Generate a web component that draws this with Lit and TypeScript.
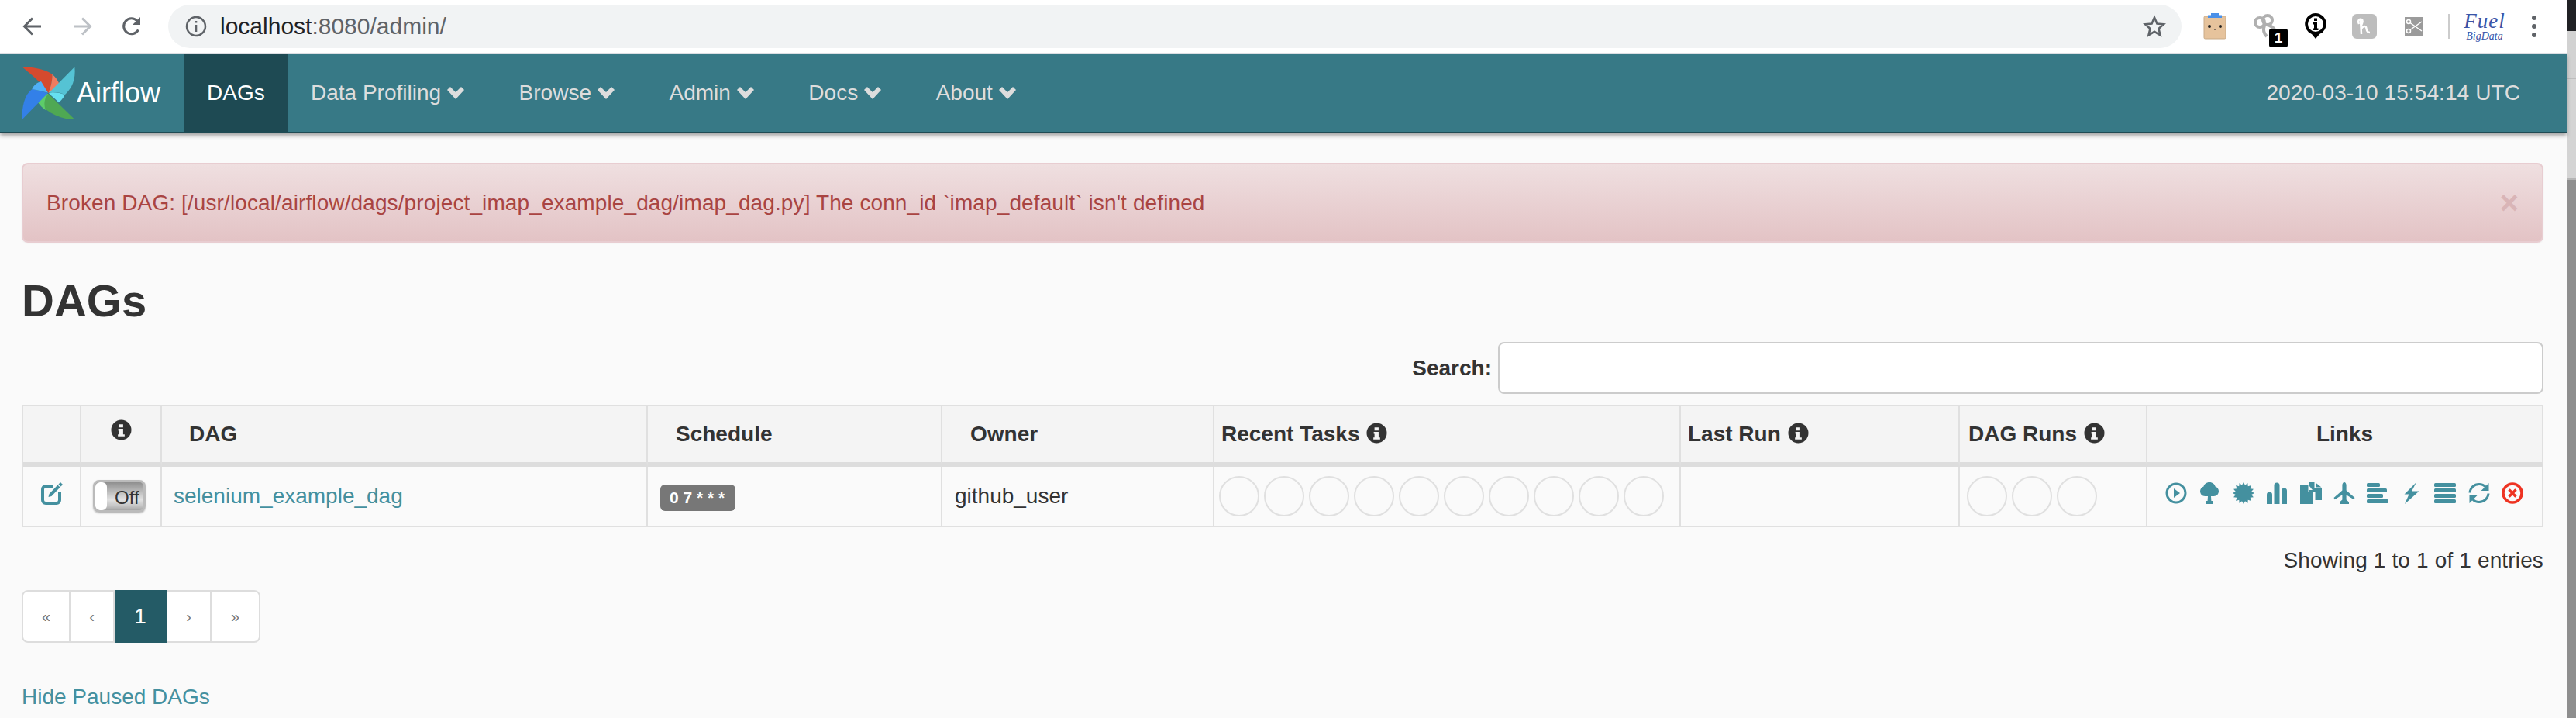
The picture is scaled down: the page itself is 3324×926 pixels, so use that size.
import { LitElement, html, css } from "lit";
import { customElement } from "lit/decorators.js";

const info = html`<svg class="info" viewBox="0 0 28 28"><circle cx="14" cy="14" r="13.5" fill="#333"/><path fill="#f4f4f4" d="M11 6.500h5.500v4H11zM10 12.500h6.500V20H18.500v2.500H9.500V20H11v-5H10z"/></svg>`;

function burst() {
  const pts: string[] = [];
  for (let i = 0; i < 32; i++) {
    const r = i % 2 === 0 ? 14 : 10.4;
    const a = (i * Math.PI) / 16;
    pts.push(`${(14 + r * Math.sin(a)).toFixed(2)},${(14 - r * Math.cos(a)).toFixed(2)}`);
  }
  return pts.join(" ");
}

const linkIcons = [
  html`<svg viewBox="0 0 28 28"><circle cx="14" cy="14" r="12" fill="none" stroke="currentColor" stroke-width="3"/><path fill="currentColor" d="M11 8l8 6-8 6z"/></svg>`,
  html`<svg viewBox="0 0 28 28"><path fill="currentColor" d="M14 0c4 0 7 2.500 7.500 5.500 3 1 4.500 3.500 4.500 6 0 3.700-2.800 6.500-6.300 6.500h-3.700l.4 6h2.100v4h-9v-4h2.100l.4-6H8.300C4.800 18 2 15.200 2 11.500c0-2.500 1.500-5 4.500-6C7 2.500 10 0 14 0z"/></svg>`,
  html`<svg viewBox="0 0 28 28"><polygon fill="currentColor" points="${burst()}"/></svg>`,
  html`<svg viewBox="0 0 28 28"><path fill="currentColor" d="M1 16a3.500 3.500 0 0 1 7 0v12H1zM10.500 4a3.500 3.500 0 0 1 7 0v24h-7zM20 11a3.500 3.500 0 0 1 7 0v17h-7z"/></svg>`,
  html`<svg viewBox="0 0 28 28"><path fill="currentColor" d="M12 0h6.500v7.500h9.500V23h-8.500V12.500h-7.500zM20 .5l7.500 6h-7.500z"/><path fill="currentColor" d="M0 4h10.500v8h6.500v16H0z"/><path fill="#fafafa" d="M12 5l4 5h-4z"/></svg>`,
  html`<svg viewBox="0 0 28 28"><path fill="currentColor" d="M14 0c1.600 0 2.600 1.800 2.600 4v6.500L27.500 20l-1.200 2.200-9.700-6v6.300l3.400 3V28h-12v-2.500l3.400-3v-6.300l-9.700 6L.5 20l10.900-9.500V4c0-2.200 1-4 2.600-4z"/></svg>`,
  html`<svg viewBox="0 0 28 28"><g fill="currentColor"><rect x="0" y="1" width="17" height="5" rx="1.500"/><rect x="0" y="8" width="26" height="5" rx="1.500"/><rect x="0" y="15" width="21" height="5" rx="1.500"/><rect x="0" y="22" width="28" height="5" rx="1.500"/></g></svg>`,
  html`<svg viewBox="0 0 28 28"><path fill="currentColor" d="M20 0L14 11.500H23.500L5 28 10.500 15.500H4.500z"/></svg>`,
  html`<svg viewBox="0 0 28 28"><g fill="currentColor"><rect x="0" y="1" width="28" height="5" rx="1.500"/><rect x="0" y="8" width="28" height="5" rx="1.500"/><rect x="0" y="15" width="28" height="5" rx="1.500"/><rect x="0" y="22" width="28" height="5" rx="1.500"/></g></svg>`,
  html`<svg viewBox="0 0 28 28"><path fill="none" stroke="currentColor" stroke-width="3" d="M2 13.500C2.500 7 7.500 2.500 14 2.500c3.500 0 6.300 1.300 8.300 3.500M26 14.500c-.5 6.500-5.500 11-12 11-3.500 0-6.300-1.300-8.300-3.500"/><path fill="currentColor" d="M26.500 1v10h-10zM1.500 27V17h10z"/></svg>`,
  html`<svg class="danger" viewBox="0 0 28 28"><circle cx="14" cy="14" r="12" fill="none" stroke="currentColor" stroke-width="3.500"/><path fill="none" stroke="currentColor" stroke-width="3.500" d="M9.500 9.500l9 9M18.500 9.500l-9 9"/></svg>`,
];

const chevron = html`<svg class="chev" viewBox="0 0 22 20"><path fill="currentColor" d="M0 6l4-4 7 7 7-7 4 4-11 12z"/></svg>`;

@customElement("app-root")
export class AppRoot extends LitElement {
  static styles = css`
    :host {
      display: flex;
      height: 926px;
      width: 3324px;
      overflow: hidden;
      font-family: "Liberation Sans", Arial, sans-serif;
      font-size: 28px;
      color: #333;
      background: #fafafa;
    }
    .main { width: 3312px; flex: none; display: flex; flex-direction: column; }
    .strip { width: 12px; flex: none; display: flex; flex-direction: column; box-shadow: inset 2px 0 2px rgba(0,0,0,.12); }
    .s1 { height: 40px; background: #202124; }
    .s2 { height: 60px; background: #d2d2d2; border-bottom: 2px solid #bdbdbd; }
    .s3 { height: 128px; background: #d4d4d4; }
    .s4 { flex: 1; background: #8e8e8e; border-top: 2px solid #b5b5b5; }

    .chrome { height: 68px; background: #fff; border-bottom: 2px solid #dee1e6; display: flex; align-items: center; flex: none; position: relative; }
    .tb { width: 26px; height: 26px; flex: none; color: #5f6368; }
    .tb.back { margin-left: 29px; }
    .tb.fwd { margin-left: 38px; color: #bdc1c6; }
    .tb.reload { margin-left: 38px; }
    .url { margin-left: 34px; width: 2598px; height: 56px; background: #f1f3f4; border-radius: 28px; display: flex; align-items: center; flex: none; }
    .url .i { width: 28px; height: 28px; margin-left: 22px; color: #5f6368; flex: none; }
    .url .text { margin-left: 17px; font-size: 30px; color: #5f6368; flex: 1; }
    .url .text b { font-weight: 400; color: #202124; }
    .url .star { width: 30px; height: 30px; color: #5f6368; margin-right: 20px; flex: none; }
    .ext { flex: none; display: block; }
    .e1 { width: 30px; height: 34px; margin-left: 28px; }
    .knot { position: relative; margin-left: 35px; width: 30px; height: 32px; flex: none; }
    .knot svg { width: 30px; height: 32px; display: block; }
    .badge { position: absolute; left: 20px; top: 19px; width: 24px; height: 24px; background: #000; color: #fff; border-radius: 3px; font: 700 19px/24px "Liberation Sans", sans-serif; text-align: center; }
    .e3 { width: 28px; height: 34px; margin-left: 36px; }
    .e4 { width: 32px; height: 32px; margin-left: 33px; }
    .e5 { width: 24px; height: 24px; margin-left: 36px; }
    .vr { width: 2px; height: 32px; background: #ccc; margin-left: 32px; flex: none; }
    .fuel { margin-left: 23px; width: 44px; display: flex; flex-direction: column; align-items: center; color: #3a55a8; font-family: "Liberation Serif", serif; font-style: italic; flex: none; }
    .fuel .a { font-size: 27px; line-height: 26px; letter-spacing: 1px; }
    .fuel .b { font-size: 14px; line-height: 14px; white-space: nowrap; }
    .dots { margin-left: 39px; width: 6px; display: flex; flex-direction: column; gap: 5px; flex: none; }
    .dots i { width: 6px; height: 6px; border-radius: 50%; background: #5f6368; display: block; }

    .nav { height: 100px; flex: none; background: #377986; border-bottom: 2px solid #1e4a53; box-shadow: 0 3px 5px rgba(0,0,0,.35); display: flex; align-items: stretch; color: #ddd; position: relative; }
    .brand { width: 237px; flex: none; display: flex; align-items: center; }
    .mill { width: 70px; height: 70px; margin-left: 28px; flex: none; }
    .brand span { color: #fff; font-size: 36px; margin-left: 1px; }
    .item { padding: 0 30px; display: flex; align-items: center; white-space: nowrap; }
    .item.active { background: #1e4a53; color: #fff; width: 134px; box-sizing: border-box; }
    .chev { width: 22px; height: 20px; margin: 0 10.5px 0 8px; flex: none; }
    .clock { margin-left: auto; margin-right: 60px; display: flex; align-items: center; letter-spacing: .1px; }

    .content { padding: 38px 30px 0 28px; display: flex; flex-direction: column; }
    .alert { height: 103px; box-sizing: border-box; border: 2px solid #e8cdd1; border-radius: 8px; background: linear-gradient(#efdfe0, #e3c3c5); color: #a94442; display: flex; align-items: center; padding: 0 30px; justify-content: space-between; box-shadow: 0 1px 2px rgba(0,0,0,.05); }
    .alert .msg { letter-spacing: .11px; }
    .alert .x { font-weight: 700; font-size: 42px; color: #d9b5b7; line-height: 1; }
    h1 { margin: 42px 0 0; font-size: 58px; line-height: 66px; font-weight: 700; color: #333; }
    .search { display: flex; justify-content: flex-end; align-items: center; gap: 8px; font-weight: 700; height: 67px; margin-top: 20px; }
    .search input { width: 1349px; height: 67px; box-sizing: border-box; border: 2px solid #ccc; border-radius: 8px; background: #fff; padding: 0; }
    table { margin-top: 14px; width: 3254px; table-layout: fixed; border-collapse: separate; border-spacing: 0; border-top: 2px solid #e0e0e0; border-left: 2px solid #e0e0e0; }
    th, td { border-right: 2px solid #e0e0e0; box-sizing: border-box; padding: 0; vertical-align: middle; text-align: left; }
    th { background: #f4f4f4; height: 78px; border-bottom: 6px solid #dddddd; font-weight: 700; white-space: nowrap; }
    td { height: 78px; border-bottom: 2px solid #e0e0e0; }
    .pl38 { padding-left: 36px; }
    .pl35 { padding-left: 35px; }
    .pl11 { padding-left: 9px; }
    .pl12 { padding-left: 11px; }
    .ctr { text-align: center; }
    .info { width: 27px; height: 27px; }
    .th-icon .info { vertical-align: 4px; }
    .with-i .info { margin-left: 9px; vertical-align: -3px; }
    .edit { display: block; width: 30px; height: 30px; margin: -6px 0 0 22px; color: #44909f; }
    .toggle { margin-left: 15px; width: 68px; height: 42px; box-sizing: border-box; border: 3px solid #bbb; border-radius: 8px; display: flex; background: linear-gradient(#8f8f8f, #bdbdbd 35%, #e2e2e2 62%, #c4c4c4 85%, #a5a5a5); box-shadow: 0 1px 2px rgba(0,0,0,.25); overflow: hidden; font-size: 24px; color: #333; }
    .toggle i { display: block; width: 15px; background: #fff; border-radius: 6px; flex: none; }
    .toggle span { margin-left: 10px; line-height: 40px; }
    a { color: #44909f; text-decoration: none; }
    .name { padding-left: 15px; }
    .label { display: inline-block; margin-left: 16px; background: #777; color: #fff; font-weight: 700; font-size: 21px; line-height: 34px; height: 34px; padding: 0 14px 0 12px; border-radius: 6px; white-space: pre; position: relative; top: 1px; }
    .owner { padding-left: 16px; }
    .circles { display: flex; gap: 6px; padding-left: 6px; }
    .circles.runs { padding-left: 9px; }
    .circles i { display: block; width: 52px; height: 52px; box-sizing: border-box; border: 2px solid #e0e0e0; border-radius: 50%; }
    .links { display: flex; gap: 15.4px; padding-left: 23px; color: #44909f; margin-top: -8px; }
    .links svg { width: 28px; height: 28px; display: block; flex: none; }
    .links .danger { color: #ee3322; }
    .entries { margin-top: 28px; text-align: right; line-height: 30px; letter-spacing: .15px; }
    .pager { margin-top: 23px; width: 308px; height: 68px; box-sizing: border-box; display: flex; }
    .pager div { background: #fff; border: 2px solid #ddd; border-left-width: 0; color: #777; font-size: 20px; display: flex; align-items: center; justify-content: center; box-sizing: border-box; width: 57px; }
    .pager div:first-child { border-left-width: 2px; border-radius: 8px 0 0 8px; width: 63px; }
    .pager div:last-child { border-radius: 0 8px 8px 0; width: 63px; }
    .pager div.on { background: #245b66; border-color: #245b66; color: #fff; font-size: 28px; width: 68px; }
    .hide { margin-top: 54px; line-height: 32px; }
  `;

  render() {
    return html`
      <div class="main">
        <div class="chrome">
          <svg class="tb back" viewBox="0 0 26 26"><path fill="none" stroke="currentColor" stroke-width="3" d="M24 13H4M13 2.500L2.500 13 13 23.500"/></svg>
          <svg class="tb fwd" viewBox="0 0 26 26"><path fill="none" stroke="currentColor" stroke-width="3" d="M2 13h20M13 2.500L23.500 13 13 23.500"/></svg>
          <svg class="tb reload" viewBox="0 0 26 26"><path fill="none" stroke="currentColor" stroke-width="3" d="M21.500 17.500A10 10 0 1 1 20 6"/><path fill="currentColor" d="M24 1v10H14z"/></svg>
          <div class="url">
            <svg class="i" viewBox="0 0 28 28"><circle cx="14" cy="14" r="12" fill="none" stroke="currentColor" stroke-width="2.500"/><path fill="currentColor" d="M12.700 7h2.600v2.600h-2.600zM12.700 12h2.600v9h-2.600z"/></svg>
            <div class="text"><b>localhost</b>:8080/admin/</div>
            <svg class="star" viewBox="0 0 30 30"><path fill="none" stroke="currentColor" stroke-width="2.600" d="M15 3.500l3.400 8 8.600.7-6.500 5.700 2 8.400L15 21.800l-7.500 4.500 2-8.400L3 12.200l8.600-.7z"/></svg>
          </div>
          <svg class="ext e1" viewBox="0 0 30 34"><rect x="1" y="4" width="28" height="29" rx="1.500" fill="#e6c39c" stroke="#c9ab88"/><path fill="#4a90e8" d="M10 0h10v2.500h4V6H6V2.500h4z"/><circle cx="8" cy="17" r="2" fill="#222"/><circle cx="22" cy="17" r="2" fill="#222"/><path d="M13 20h4l-2 2z" fill="#222"/></svg>
          <div class="knot">
            <svg viewBox="0 0 30 32"><g fill="none" stroke="#b0b0b0" stroke-width="4"><circle cx="8" cy="11" r="6"/><circle cx="18" cy="8" r="6"/><path d="M14 15c-2 5-1 10 3 14M17 14c5 1 8 3 10 6"/></g></svg>
            <div class="badge">1</div>
          </div>
          <svg class="ext e3" viewBox="0 0 28 34"><path fill="#000" d="M14 0a14 14 0 0 1 5 27l-5 6-5-6A14 14 0 0 1 14 0z"/><circle cx="14" cy="14" r="10" fill="#fff"/><path fill="#000" d="M12 6.500h4v3.500h-4zM11 12h5v7.500h1.500V22h-7v-2.500H12V14.500h-1z"/></svg>
          <svg class="ext e4" viewBox="0 0 32 32"><rect width="32" height="32" rx="6" fill="#bdbdbd"/><path fill="none" stroke="#fff" stroke-width="2.500" d="M9 13c-2-4 0-7 3-6s1 6-1 9M11 8l1 18M12 19c2-3 5-4 6-2s0 7 5 7"/></svg>
          <svg class="ext e5" viewBox="0 0 24 24"><rect width="24" height="24" fill="#9b9b9b"/><g fill="none" stroke="#fff" stroke-width="1.500"><circle cx="5" cy="6" r="2.500"/><circle cx="5" cy="18" r="2.500"/><path d="M7 7.500L22 18M7 16.500L22 6"/></g></svg>
          <div class="vr"></div>
          <div class="fuel"><span class="a">Fuel</span><span class="b">BigData</span></div>
          <div class="dots"><i></i><i></i><i></i></div>
        </div>
        <div class="nav">
          <div class="brand">
            <svg class="mill" viewBox="85 78 210 210">
              <path fill="#d54a2e" d="M87 82C120 82 170 88 203 110C205 130 198 160 188 183C170 150 125 115 87 82Z"/>
              <path fill="#f07c5f" d="M203 110C218 122 228 138 232 152L188 183C198 160 205 130 203 110Z"/>
              <path fill="#55c3d4" d="M290 82C295 130 280 165 252 190C232 180 210 178 190 183Z"/>
              <path fill="#66e0f0" d="M190 184C205 178 232 182 252 190C245 205 235 215 228 220C215 205 200 195 190 184Z"/>
              <path fill="#4fa853" d="M146 216C150 200 170 190 188 186L290 285C240 285 190 265 146 216Z"/>
              <path fill="#5dcc6a" d="M146 216C150 200 170 190 188 186C172 205 170 225 178 250C165 240 155 230 146 216Z"/>
              <path fill="#3380e8" d="M87 285C85 240 95 190 125 168C145 172 170 178 186 184Z"/>
              <path fill="#50b0f8" d="M125 168C130 155 145 142 160 138C170 155 180 170 187 182C170 178 145 172 125 168Z"/>
            </svg>
            <span>Airflow</span>
          </div>
          <div class="item active">DAGs</div>
          <div class="item">Data Profiling${chevron}</div>
          <div class="item">Browse${chevron}</div>
          <div class="item">Admin${chevron}</div>
          <div class="item">Docs${chevron}</div>
          <div class="item">About${chevron}</div>
          <div class="clock">2020-03-10 15:54:14 UTC</div>
        </div>
        <div class="content">
          <div class="alert">
            <span class="msg">Broken DAG: [/usr/local/airflow/dags/project_imap_example_dag/imap_dag.py] The conn_id \`imap_default\` isn't defined</span>
            <span class="x">×</span>
          </div>
          <h1>DAGs</h1>
          <div class="search"><label>Search:</label><input type="text" /></div>
          <table>
            <colgroup>
              ${[75, 104, 627, 380, 351, 602, 360, 242, 511].map((w) => html`<col style="width:${w}px" />`)}
            </colgroup>
            <thead>
              <tr>
                <th></th>
                <th class="ctr th-icon">${info}</th>
                <th class="pl35">DAG</th>
                <th class="pl38">Schedule</th>
                <th class="pl38">Owner</th>
                <th class="pl11 with-i">Recent Tasks${info}</th>
                <th class="pl11 with-i">Last Run${info}</th>
                <th class="pl12 with-i">DAG Runs${info}</th>
                <th class="ctr">Links</th>
              </tr>
            </thead>
            <tbody>
              <tr>
                <td><svg class="edit" viewBox="0 0 30 30"><path fill="none" stroke="currentColor" stroke-width="4" d="M17 5H7a4 4 0 0 0-4 4v14a4 4 0 0 0 4 4h14a4 4 0 0 0 4-4V13"/><path fill="currentColor" d="M22.500 3.500l3 3L14.500 18l-4 1 1-4zM26 0l3 3-2.500 2.500-3-3z"/></svg></td>
                <td><div class="toggle"><i></i><span>Off</span></div></td>
                <td class="name"><a>selenium_example_dag</a></td>
                <td><span class="label">0 7 * * *</span></td>
                <td class="owner">github_user</td>
                <td><div class="circles">${Array.from({ length: 10 }, () => html`<i></i>`)}</div></td>
                <td></td>
                <td><div class="circles runs">${Array.from({ length: 3 }, () => html`<i></i>`)}</div></td>
                <td><div class="links">${linkIcons}</div></td>
              </tr>
            </tbody>
          </table>
          <div class="entries">Showing 1 to 1 of 1 entries</div>
          <div class="pager">
            <div>«</div><div>‹</div><div class="on">1</div><div>›</div><div>»</div>
          </div>
          <div class="hide"><a>Hide Paused DAGs</a></div>
        </div>
      </div>
      <div class="strip">
        <div class="s1"></div><div class="s2"></div><div class="s3"></div><div class="s4"></div>
      </div>
    `;
  }
}
